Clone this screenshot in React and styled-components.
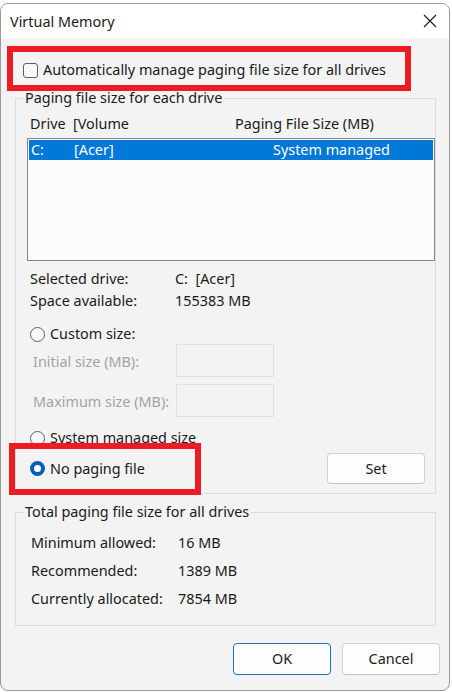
import React from "react";
import styled, { createGlobalStyle } from "styled-components";

const Global = createGlobalStyle`
  html, body { margin: 0; padding: 0; background: #ffffff; }
  body { font-family: "Noto Sans", "Open Sans", sans-serif; font-size: 14.4px; color: #1a1a1a; }
  * { box-sizing: border-box; }
`;

const Window = styled.div`
  position: relative;
  margin-top: 3px;
  width: 450px;
  height: 688px;
  background: #f3f3f3;
  border: 1px solid #9a9a9a;
  border-radius: 8px;
  overflow: hidden;
  display: flex;
  flex-direction: column;
`;

const TitleBar = styled.div`
  height: 34px;
  background: #ffffff;
  display: flex;
  align-items: center;
  justify-content: space-between;
  padding: 0 12px 0 9px;
  flex-shrink: 0;
`;

const Title = styled.span`
  font-size: 14.4px;
  color: #1b1b1b;
  line-height: 20px;
  margin-top: 1px;
`;

const CloseBtn = styled.span`
  display: flex;
  width: 14px;
  height: 14px;
`;

const Body = styled.div`
  display: flex;
  flex-direction: column;
  padding: 0 13px 0 14px;
`;

const CheckRow = styled.label`
  display: flex;
  align-items: center;
  height: 20px;
  margin-top: 22px;
  padding-left: 8px;
  gap: 5px;
  line-height: 20px;
`;

const CheckBox = styled.span`
  width: 15px;
  height: 15px;
  border: 1px solid #5f5f5f;
  border-radius: 3px;
  background: #f8f8f8;
  flex-shrink: 0;
`;

const Group = styled.fieldset`
  margin: ${(p) => p.$mt}px 0 0 0;
  padding: 0 0 ${(p) => p.$pb}px 11px;
  border: 1px solid #dddddd;
  min-width: 0;
`;

const Legend = styled.legend`
  padding: 0 2px;
  margin-left: -4px;
  line-height: 20px;
  height: 20px;
  color: #1a1a1a;
`;

const HeaderRow = styled.div`
  display: grid;
  grid-template-columns: 43px 162px 1fr;
  height: 20px;
  line-height: 20px;
  margin-top: 6px;
  padding-left: 3px;
`;

const ListBox = styled.div`
  margin-top: 4px;
  height: 123px;
  border: 1px solid #868686;
  background: #fcfcfc;
  padding: 1px;
`;

const ListRow = styled.div`
  display: grid;
  grid-template-columns: 43px 199px 1fr;
  height: 20px;
  line-height: 20px;
  padding-left: 2px;
  background: ${(p) => (p.$selected ? "#0078d7" : "transparent")};
  color: ${(p) => (p.$selected ? "#ffffff" : "#1a1a1a")};
`;

const InfoGrid = styled.div`
  display: grid;
  grid-template-columns: ${(p) => p.$col}px 1fr;
  grid-auto-rows: ${(p) => p.$row}px;
  align-items: center;
  margin-top: ${(p) => p.$mt}px;
  padding-left: ${(p) => p.$pl}px;
  line-height: 20px;
`;

const RadioRow = styled.label`
  display: flex;
  align-items: center;
  gap: 5px;
  height: 20px;
  line-height: 20px;
  margin-top: ${(p) => p.$mt}px;
  padding-left: 3px;
`;

const Radio = styled.span`
  width: 15px;
  height: 15px;
  border-radius: 50%;
  flex-shrink: 0;
  border: ${(p) => (p.$checked ? "none" : "1px solid #5f5f5f")};
  background: ${(p) => (p.$checked ? "#005fb8" : "#f8f8f8")};
  display: flex;
  align-items: center;
  justify-content: center;
  &::after {
    content: "";
    display: ${(p) => (p.$checked ? "block" : "none")};
    width: 7px;
    height: 7px;
    border-radius: 50%;
    background: #ffffff;
  }
`;

const FieldRow = styled.div`
  display: grid;
  grid-template-columns: 143px 98px;
  align-items: center;
  margin-top: ${(p) => p.$mt}px;
  padding-left: 6px;
`;

const DisabledLabel = styled.span`
  color: #a3a3a3;
  line-height: 20px;
  margin-top: 3px;
`;

const TextField = styled.div`
  height: 33px;
  border: 1px solid #e1e1e1;
  background: #f3f3f3;
`;

const SetRow = styled.div`
  display: flex;
  align-items: center;
  justify-content: space-between;
  margin-top: 5px;
  height: 31px;
  padding-right: 10px;
`;

const Button = styled.button`
  width: ${(p) => p.$w}px;
  height: ${(p) => p.$h}px;
  border-radius: 4px;
  background: #fdfdfd;
  border: 1px solid ${(p) => (p.$primary ? "#1f6fbf" : "#d3d3d3")};
  border-bottom-color: ${(p) => (p.$primary ? "#1f6fbf" : "#c2c2c2")};
  font-family: inherit;
  font-size: 14.4px;
  color: #1a1a1a;
  padding: 0;
  line-height: 20px;
`;

const ButtonBar = styled.div`
  display: flex;
  justify-content: flex-end;
  gap: 11px;
  margin-top: 17px;
  margin-right: -4px;
`;

const Highlight = styled.div`
  position: absolute;
  left: ${(p) => p.$x}px;
  top: ${(p) => p.$y}px;
  width: ${(p) => p.$w}px;
  height: ${(p) => p.$h}px;
  border: 6px solid #ed1c24;
  pointer-events: none;
`;

const Span = styled.span``;

export default function App() {
  return (
    <>
      <Global />
      <Window>
        <TitleBar>
          <Title>Virtual Memory</Title>
          <CloseBtn>
            <svg width="14" height="14" viewBox="0 0 14 14">
              <path d="M1 1 L13 13 M13 1 L1 13" stroke="#1a1a1a" strokeWidth="1.1" fill="none" />
            </svg>
          </CloseBtn>
        </TitleBar>
        <Body>
          <CheckRow>
            <CheckBox />
            <span>Automatically manage paging file size for all drives</span>
          </CheckRow>

          <Group $mt={8} $pb={9}>
            <Legend>Paging file size for each drive</Legend>
            <HeaderRow>
              <Span>Drive</Span>
              <Span>[Volume</Span>
              <Span>Paging File Size (MB)</Span>
            </HeaderRow>
            <ListBox>
              <ListRow $selected>
                <Span>C:</Span>
                <Span>[Acer]</Span>
                <Span>System managed</Span>
              </ListRow>
            </ListBox>

            <InfoGrid $col={145} $row={22} $mt={7} $pl={3}>
              <Span>Selected drive:</Span>
              <Span>C:&nbsp;&nbsp;[Acer]</Span>
              <Span>Space available:</Span>
              <Span>155383 MB</Span>
            </InfoGrid>

            <RadioRow $mt={12}>
              <Radio />
              <span>Custom size:</span>
            </RadioRow>
            <FieldRow $mt={0}>
              <DisabledLabel>Initial size (MB):</DisabledLabel>
              <TextField />
            </FieldRow>
            <FieldRow $mt={7}>
              <DisabledLabel>Maximum size (MB):</DisabledLabel>
              <TextField />
            </FieldRow>
            <RadioRow $mt={11}>
              <Radio />
              <span>System managed size</span>
            </RadioRow>
            <SetRow>
              <RadioRow $mt={0}>
                <Radio $checked />
                <span>No paging file</span>
              </RadioRow>
              <Button $w={98} $h={31}>Set</Button>
            </SetRow>
          </Group>

          <Group $mt={8} $pb={12}>
            <Legend>Total paging file size for all drives</Legend>
            <InfoGrid $col={147} $row={28} $mt={7} $pl={4}>
              <Span>Minimum allowed:</Span>
              <Span>16 MB</Span>
              <Span>Recommended:</Span>
              <Span>1389 MB</Span>
              <Span>Currently allocated:</Span>
              <Span>7854 MB</Span>
            </InfoGrid>
          </Group>

          <ButtonBar>
            <Button $w={98} $h={32} $primary>OK</Button>
            <Button $w={98} $h={32}>Cancel</Button>
          </ButtonBar>
        </Body>
        <Highlight $x={6} $y={42} $w={404} $h={45} />
        <Highlight $x={8} $y={439} $w={192} $h={52} />
      </Window>
    </>
  );
}
